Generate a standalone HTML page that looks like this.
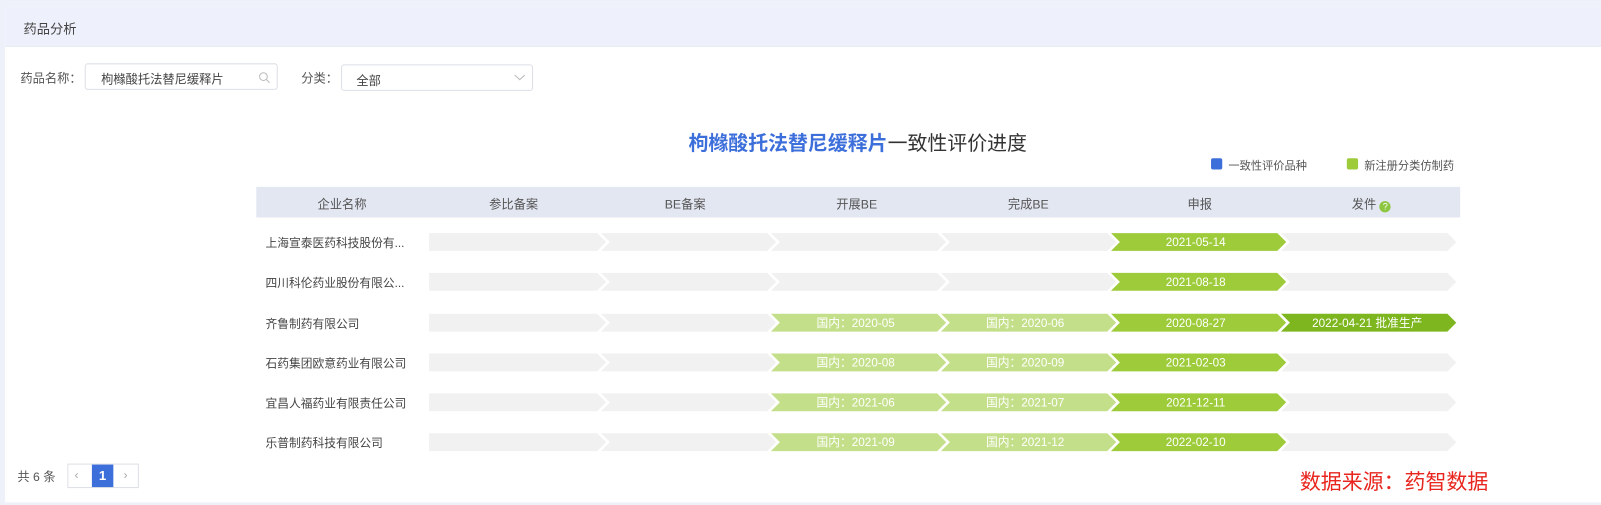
<!DOCTYPE html>
<html><head><meta charset="utf-8"><style>
*{margin:0;padding:0;box-sizing:border-box}
body{width:1601px;height:505px;background:#eef1fa;font-family:"Liberation Sans","Noto Sans CJK SC",sans-serif;overflow:hidden;color:#555}
.wrap{position:absolute;left:0;top:0;width:1568px;height:495px;transform:scale(1.0211);transform-origin:0 0}
.card{position:absolute;left:5px;top:6px;right:-40px;height:486px;background:#fff}
.hd{position:absolute;left:0;top:0;right:0;height:40px;background:#eef1fb;border-bottom:1px solid #e8ebf5}
.abs{position:absolute}
.t{font-size:12px;color:#555;white-space:nowrap}
.inp{position:absolute;border:1px solid #dcdfe6;border-radius:3px;background:#fff;height:26px}
.th{position:absolute;top:183px;height:30px;background:#e3e7f2;left:251px;width:1179px}
.th span{position:absolute;top:8px;font-size:12px;color:#555;transform:translateX(-50%);white-space:nowrap}
.co{position:absolute;left:260px;font-size:11.5px;color:#444;white-space:nowrap}
</style></head><body>
<div class="wrap">
<div class="card">
<div class="hd"><div class="abs t" style="left:18px;top:12px;font-size:13px;color:#444">药品分析</div></div>
</div>
<div class="abs t" style="left:20px;top:68px">药品名称：</div>
<div class="inp" style="left:83px;top:62px;width:189px"><span class="abs t" style="left:15px;top:6px;color:#444">枸橼酸托法替尼缓释片</span>
<svg class="abs" style="right:6px;top:7px" width="12" height="12" viewBox="0 0 12 12"><circle cx="5" cy="5" r="3.8" fill="none" stroke="#bbb" stroke-width="1"/><line x1="8" y1="8" x2="11" y2="11" stroke="#bbb"/></svg></div>
<div class="abs t" style="left:295px;top:68px">分类：</div>
<div class="inp" style="left:334px;top:63px;width:188px"><span class="abs t" style="left:14px;top:6px;color:#444">全部</span>
<svg class="abs" style="right:6px;top:8px" width="12" height="8" viewBox="0 0 12 8"><polyline points="1,1.5 6,6 11,1.5" fill="none" stroke="#bbb"/></svg></div>

<div class="abs" style="left:0;width:1680px;top:124px;text-align:center;font-size:19.5px;color:#333;white-space:nowrap"><b style="color:#3d6fdb">枸橼酸托法替尼缓释片</b>一致性评价进度</div>
<div class="abs" style="left:1186px;top:155px;width:11px;height:11px;background:#3d6fdb;border-radius:2px"></div>
<div class="abs t" style="left:1203px;top:154px;font-size:11px">一致性评价品种</div>
<div class="abs" style="left:1319px;top:155px;width:11px;height:11px;background:#9dcb3a;border-radius:2px"></div>
<div class="abs t" style="left:1336px;top:154px;font-size:11px">新注册分类仿制药</div>

<div class="th">
<span style="left:84px">企业名称</span><span style="left:252px">参比备案</span><span style="left:420px">BE备案</span><span style="left:588px">开展BE</span><span style="left:756px">完成BE</span><span style="left:924px">申报</span><span style="left:1092px">发件 <i style="display:inline-block;width:11px;height:11px;border-radius:50%;background:#8dc63f;color:#fff;font-size:9px;font-style:normal;text-align:center;line-height:11px;vertical-align:-1px">?</i></span>
</div>

<div class="co" style="top:230px">上海宣泰医药科技股份有...</div>
<div class="co" style="top:269px">四川科伦药业股份有限公...</div>
<div class="co" style="top:309px">齐鲁制药有限公司</div>
<div class="co" style="top:348px">石药集团欧意药业有限公司</div>
<div class="co" style="top:387px">宜昌人福药业有限责任公司</div>
<div class="co" style="top:426px">乐普制药科技有限公司</div>

<svg class="abs" style="left:0;top:0" width="1568" height="495" font-family="Liberation Sans,Noto Sans CJK SC,sans-serif" font-size="11.5" text-anchor="middle">
<defs><polygon id="p" points="0,-10 166.5,-10 176.5,0 166.5,10 0,10 10,0" stroke="#fff" stroke-width="2.5"/>
<polygon id="f" points="0,-10 166.5,-10 176.5,0 166.5,10 0,10" stroke="#fff" stroke-width="2.5"/></defs>
<g transform="translate(0,237)"><use href="#f" x="419" fill="#f1f1f1"/><use href="#p" x="585.5" fill="#f1f1f1"/><use href="#p" x="752" fill="#f1f1f1"/><use href="#p" x="918.5" fill="#f1f1f1"/><use href="#p" x="1085" fill="#9dcb3a"/><use href="#p" x="1251.5" fill="#f1f1f1"/><text x="1171" y="4" fill="#fff">2021-05-14</text></g>
<g transform="translate(0,276)"><use href="#f" x="419" fill="#f1f1f1"/><use href="#p" x="585.5" fill="#f1f1f1"/><use href="#p" x="752" fill="#f1f1f1"/><use href="#p" x="918.5" fill="#f1f1f1"/><use href="#p" x="1085" fill="#9dcb3a"/><use href="#p" x="1251.5" fill="#f1f1f1"/><text x="1171" y="4" fill="#fff">2021-08-18</text></g>
<g transform="translate(0,316)"><use href="#f" x="419" fill="#f1f1f1"/><use href="#p" x="585.5" fill="#f1f1f1"/><use href="#p" x="752" fill="#c4df8a"/><use href="#p" x="918.5" fill="#c4df8a"/><use href="#p" x="1085" fill="#9dcb3a"/><use href="#p" x="1251.5" fill="#7db61e"/><text x="838" y="4" fill="#fff">国内：2020-05</text><text x="1004" y="4" fill="#fff">国内：2020-06</text><text x="1171" y="4" fill="#fff">2020-08-27</text><text x="1339" y="4" fill="#fff">2022-04-21 批准生产</text></g>
<g transform="translate(0,355)"><use href="#f" x="419" fill="#f1f1f1"/><use href="#p" x="585.5" fill="#f1f1f1"/><use href="#p" x="752" fill="#c4df8a"/><use href="#p" x="918.5" fill="#c4df8a"/><use href="#p" x="1085" fill="#9dcb3a"/><use href="#p" x="1251.5" fill="#f1f1f1"/><text x="838" y="4" fill="#fff">国内：2020-08</text><text x="1004" y="4" fill="#fff">国内：2020-09</text><text x="1171" y="4" fill="#fff">2021-02-03</text></g>
<g transform="translate(0,394)"><use href="#f" x="419" fill="#f1f1f1"/><use href="#p" x="585.5" fill="#f1f1f1"/><use href="#p" x="752" fill="#c4df8a"/><use href="#p" x="918.5" fill="#c4df8a"/><use href="#p" x="1085" fill="#9dcb3a"/><use href="#p" x="1251.5" fill="#f1f1f1"/><text x="838" y="4" fill="#fff">国内：2021-06</text><text x="1004" y="4" fill="#fff">国内：2021-07</text><text x="1171" y="4" fill="#fff">2021-12-11</text></g>
<g transform="translate(0,433)"><use href="#f" x="419" fill="#f1f1f1"/><use href="#p" x="585.5" fill="#f1f1f1"/><use href="#p" x="752" fill="#c4df8a"/><use href="#p" x="918.5" fill="#c4df8a"/><use href="#p" x="1085" fill="#9dcb3a"/><use href="#p" x="1251.5" fill="#f1f1f1"/><text x="838" y="4" fill="#fff">国内：2021-09</text><text x="1004" y="4" fill="#fff">国内：2021-12</text><text x="1171" y="4" fill="#fff">2022-02-10</text></g>
</svg>

<div class="abs t" style="left:17px;top:458px;font-size:12px">共 6 条</div>
<div class="abs" style="left:66px;top:454px;width:70px;height:24px;border:1px solid #dcdfe6;background:#fff"></div>
<div class="abs t" style="left:73px;top:458px;color:#aaa">‹</div>
<div class="abs" style="left:90px;top:455px;width:21px;height:22px;background:#3d6fdb;color:#fff;font-size:13px;font-weight:bold;text-align:center;line-height:22px">1</div>
<div class="abs t" style="left:121px;top:458px;color:#aaa">›</div>
<div class="abs" style="left:1273px;top:455px;font-size:20.5px;color:#e8251e;white-space:nowrap">数据来源：药智数据</div>
</div>
</body></html>
